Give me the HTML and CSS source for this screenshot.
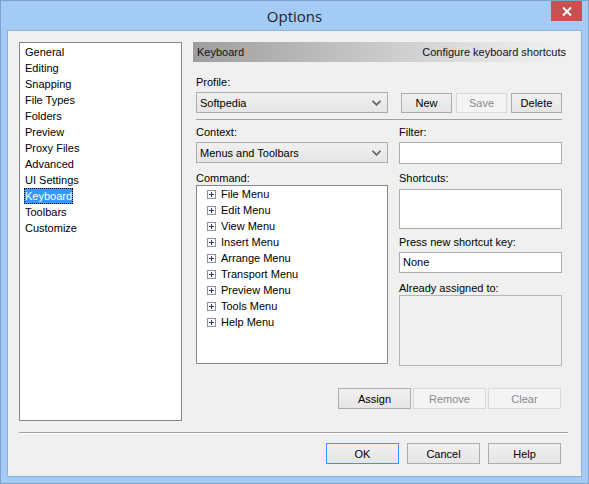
FILE: index.html
```html
<!DOCTYPE html>
<html lang="en">

<head>
    <meta charset="UTF-8">
    <title>Options</title>
    <link rel="stylesheet" href="styles.css">
</head>

<body>
    <div class="window">
        <div class="titlebar">
            <span></span>
            <span class="title">Options</span>
            <span class="close">
                <svg width="10" height="9" viewBox="0 0 10 9">
                    <path d="M1 0.5 L9 8.5 M9 0.5 L1 8.5" stroke="#fff" stroke-width="2"/>
                </svg>
            </span>
        </div>

        <div class="client">
            <div class="main">
                <ul class="pages">
                    <li>General</li>
                    <li>Editing</li>
                    <li>Snapping</li>
                    <li>File Types</li>
                    <li>Folders</li>
                    <li>Preview</li>
                    <li>Proxy Files</li>
                    <li>Advanced</li>
                    <li>UI Settings</li>
                    <li class="selected"><span>Keyboard</span></li>
                    <li>Toolbars</li>
                    <li>Customize</li>
                </ul>

                <div class="panel">
                    <div class="panel-header">
                        <span>Keyboard</span>
                        <span>Configure keyboard shortcuts</span>
                    </div>

                    <div class="form">
                        <div class="label profile-label">Profile:</div>
                        <div class="profile-row">
                            <div class="combo">
                                <span>Softpedia</span>
                                <svg width="9" height="6" viewBox="0 0 9 6">
                                    <path d="M0.5 0.8 L4.5 4.8 L8.5 0.8" fill="none" stroke="#606060" stroke-width="1.6"/>
                                </svg>
                            </div>
                            <div class="btn-group">
                                <button class="btn small">New</button>
                                <button class="btn small" disabled>Save</button>
                                <button class="btn small">Delete</button>
                            </div>
                        </div>
                        <div class="rule"></div>

                        <div class="columns">
                            <div class="col-left">
                                <div class="label">Context:</div>
                                <div class="combo">
                                    <span>Menus and Toolbars</span>
                                    <svg width="9" height="6" viewBox="0 0 9 6">
                                        <path d="M0.5 0.8 L4.5 4.8 L8.5 0.8" fill="none" stroke="#606060" stroke-width="1.6"/>
                                    </svg>
                                </div>
                                <div class="label gap">Command:</div>
                                <ul class="tree">
                                    <li><i class="plus"></i>File Menu</li>
                                    <li><i class="plus"></i>Edit Menu</li>
                                    <li><i class="plus"></i>View Menu</li>
                                    <li><i class="plus"></i>Insert Menu</li>
                                    <li><i class="plus"></i>Arrange Menu</li>
                                    <li><i class="plus"></i>Transport Menu</li>
                                    <li><i class="plus"></i>Preview Menu</li>
                                    <li><i class="plus"></i>Tools Menu</li>
                                    <li><i class="plus"></i>Help Menu</li>
                                </ul>
                            </div>

                            <div class="col-right">
                                <div class="label">Filter:</div>
                                <div class="field"></div>
                                <div class="label gap-r">Shortcuts:</div>
                                <div class="field shortcuts"></div>
                                <div class="label press">Press new shortcut key:</div>
                                <div class="field key">None</div>
                                <div class="label gap">Already assigned to:</div>
                                <div class="field assigned"></div>
                            </div>
                        </div>

                        <div class="assign-row">
                            <button class="btn">Assign</button>
                            <button class="btn" disabled>Remove</button>
                            <button class="btn" disabled>Clear</button>
                        </div>
                    </div>
                </div>
            </div>

            <div class="separator"></div>

            <div class="footer">
                <button class="btn default">OK</button>
                <button class="btn">Cancel</button>
                <button class="btn">Help</button>
            </div>
        </div>
    </div>
</body>

</html>
```

FILE: styles.css
```css
body {
    margin: 0;
    font-family: "Liberation Sans", Arial, sans-serif;
    font-size: 11px;
    color: #000;
}

.window {
    width: 589px;
    height: 484px;
    box-sizing: border-box;
    background-color: #a3cbf6;
    border: 1px solid #7fa2cb;
    padding: 0 6px 6px 6px;
}

.titlebar {
    height: 29px;
    display: grid;
    grid-template-columns: 1fr auto 1fr;
}

.title {
    font-family: "Open Sans", "Noto Sans", sans-serif;
    font-size: 15px;
    color: #1e1e1e;
    line-height: 30px;
}

.close {
    justify-self: end;
    width: 31px;
    height: 20px;
    background-color: #c75050;
    display: flex;
    justify-content: center;
    align-items: center;
}

.client {
    height: 447px;
    box-sizing: border-box;
    background-color: #f0f0f0;
    border: 1px solid #8eb0d9;
    padding: 11px 20px 12px 11px;
    display: flex;
    flex-direction: column;
}

.main {
    height: 379px;
    display: flex;
    gap: 11px;
    margin-right: -7px;
}

.pages {
    list-style: none;
    margin: 0;
    padding: 1px 0 0 4px;
    width: 163px;
    box-sizing: border-box;
    background: #fff;
    border: 1px solid #828790;
}

.pages li {
    height: 16px;
    line-height: 16px;
}

.pages li:not(.selected) {
    padding-left: 1px;
}

.pages .selected span {
    display: inline-block;
    height: 16px;
    padding: 0 1px;
    box-sizing: border-box;
    background: #3399ff;
    color: #fff;
    outline: 1px dotted #000;
    outline-offset: -1px;
}

.panel {
    width: 375px;
    display: flex;
    flex-direction: column;
}

.panel-header {
    height: 20px;
    display: flex;
    justify-content: space-between;
    align-items: center;
    padding: 0 2px 0 4px;
    background: linear-gradient(to right, #9e9e9e, #e8e8e8 85%, #f0f0f0);
    color: #111;
}

.form {
    flex: 1;
    display: flex;
    flex-direction: column;
    padding: 0 6px 12px 3px;
}

.label {
    height: 14px;
    line-height: 14px;
}

.profile-label {
    margin-top: 13px;
}

.profile-row {
    display: flex;
    margin-top: 3px;
}

.combo {
    width: 192px;
    height: 21px;
    box-sizing: border-box;
    border: 1px solid #acacac;
    background: linear-gradient(#f0f0f0, #e5e5e5);
    display: flex;
    justify-content: space-between;
    align-items: center;
    padding: 0 6px 0 3px;
    margin-top: 3px;
}

.profile-row .combo {
    margin-top: 0;
}

.btn-group {
    margin-left: auto;
    display: flex;
    gap: 4px;
    padding-top: 1px;
}

.btn {
    width: 73px;
    height: 21px;
    box-sizing: border-box;
    border: 1px solid #acacac;
    background: linear-gradient(#f0f0f0, #e5e5e5);
    font-family: "Liberation Sans", Arial, sans-serif;
    font-size: 11px;
    color: #000;
    padding: 0;
}

.btn.small {
    width: 51px;
    height: 20px;
}

.btn:disabled {
    background: #f4f4f4;
    border-color: #d9d9d9;
    color: #8a8a8a;
}

.btn.default {
    border-color: #3399ff;
}

.rule {
    height: 1px;
    background: #a0a0a0;
    margin-top: 6px;
}

.columns {
    display: flex;
    gap: 11px;
    margin-top: 5px;
}

.col-left {
    width: 192px;
}

.col-right {
    flex: 1;
}

.gap {
    margin-top: 8px;
}

.gap-r {
    margin-top: 7px;
}

.tree {
    list-style: none;
    margin: 0;
    padding: 0 0 0 10px;
    height: 179px;
    box-sizing: border-box;
    background: #fff;
    border: 1px solid #828790;
}

.tree li {
    height: 16px;
    display: flex;
    align-items: center;
}

.plus {
    width: 9px;
    height: 9px;
    box-sizing: border-box;
    border: 1px solid #8e8f9f;
    margin-right: 5px;
    position: relative;
    background: #fdfdfd;
}

.plus::before,
.plus::after {
    content: "";
    position: absolute;
    background: #2b3a67;
}

.plus::before {
    left: 1px;
    top: 3px;
    width: 5px;
    height: 1px;
}

.plus::after {
    left: 3px;
    top: 1px;
    width: 1px;
    height: 5px;
}

.field {
    height: 22px;
    box-sizing: border-box;
    border: 1px solid #abadb3;
    background: #fff;
    margin-top: 3px;
    padding-left: 3px;
    line-height: 19px;
}

.shortcuts {
    height: 40px;
    margin-top: 4px;
}

.press {
    margin-top: 6px;
}

.key {
    height: 21px;
}

.assigned {
    height: 71px;
    margin-top: 0;
    background: #f0f0f0;
    border-color: #b5b5b5;
}

.assign-row {
    margin-top: auto;
    display: flex;
    justify-content: flex-end;
    gap: 2px;
    margin-right: 1px;
}

.separator {
    margin-top: 11px;
    height: 1px;
    background: #a0a0a0;
    border-bottom: 1px solid #fff;
    margin-right: -7px;
}

.footer {
    margin-top: 9px;
    display: flex;
    justify-content: flex-end;
    gap: 8px;
}
```
